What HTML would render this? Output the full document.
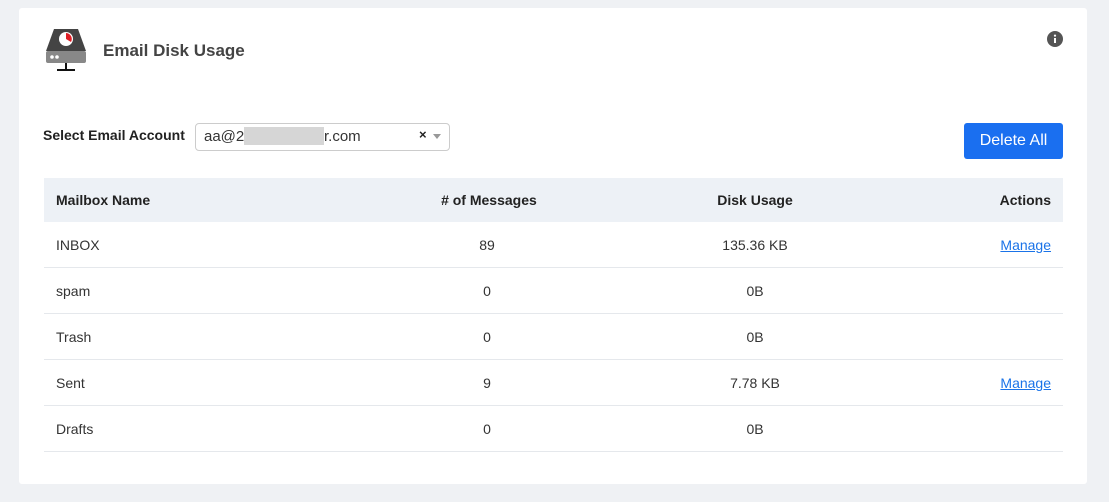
<!DOCTYPE html>
<html><head><style>
body{margin:0;width:1109px;height:502px;background:#eff1f4;font-family:"Liberation Sans",sans-serif;color:#222;position:relative;overflow:hidden}
.card{position:absolute;left:19px;top:8px;width:1068px;height:476px;background:#fff;border-radius:3px}
.abs{position:absolute}
table{position:absolute;left:44px;top:178px;width:1019px;border-collapse:collapse;font-size:14px;table-layout:fixed}
th{background:#edf1f6;height:44px;padding:0;font-weight:bold;font-size:14px;color:#222}
td{height:45px;padding:0;border-bottom:1px solid #e5e8ec;color:#333}
th:first-child,td:first-child{text-align:left;padding-left:12px}
th:last-child,td:last-child{text-align:right;padding-right:12px}
.c{text-align:center}
a{color:#1a73e8;text-decoration:underline}
</style></head><body>
<div class="card"></div>
<svg class="abs" style="left:45px;top:27px" width="44" height="46" viewBox="0 0 44 46">
<path d="M9 2 H33 L41 24 H1 Z" fill="#444"/>
<rect x="1" y="24" width="40" height="12" rx="2" fill="#888"/>
<circle cx="7" cy="30" r="1.8" fill="#fff"/><circle cx="12" cy="30" r="1.8" fill="#fff"/>
<circle cx="21" cy="12" r="7" fill="#fff"/>
<path d="M21 12 V6 A6 6 0 0 1 26 15 Z" fill="#e01e25"/>
<rect x="20" y="36" width="2" height="7" fill="#111"/><rect x="12" y="42" width="18" height="2" fill="#111"/>
</svg>
<div class="abs" style="left:103px;top:41px;font-size:17px;font-weight:bold;color:#444">Email Disk Usage</div>
<svg class="abs" style="left:1047px;top:31px" width="16" height="16"><circle cx="8" cy="8" r="8" fill="#555"/><rect x="7" y="7" width="2" height="5" fill="#fff"/><circle cx="8" cy="4.6" r="1.1" fill="#fff"/></svg>
<div class="abs" style="left:43px;top:127px;font-size:14px;font-weight:bold;color:#222">Select Email Account</div>
<div class="abs" style="left:195px;top:123px;width:253px;height:26px;border:1px solid #ccc;border-radius:4px;background:#fff"></div>
<div class="abs" style="left:204px;top:128px;font-size:15px;color:#333">aa@2</div>
<div class="abs" style="left:244px;top:127px;width:80px;height:18px;background:#d6d6d6"></div>
<div class="abs" style="left:324px;top:128px;font-size:15px;color:#333">r.com</div>
<div class="abs" style="left:419px;top:127px;font-size:13px;font-weight:bold">×</div>
<div class="abs" style="left:433px;top:134px;width:0;height:0;border-left:4px solid transparent;border-right:4px solid transparent;border-top:5px solid #999"></div>
<div class="abs" style="left:964px;top:123px;width:99px;height:36px;background:#1a6ff0;border-radius:3px;color:#fff;font-size:16px;text-align:center;line-height:36px">Delete All</div>
<table>
<colgroup><col style="width:300px"><col style="width:286px"><col style="width:250px"><col style="width:183px"></colgroup>
<tr><th>Mailbox Name</th><th class="c">&nbsp;# of Messages</th><th class="c">Disk Usage</th><th>Actions</th></tr>
<tr><td>INBOX</td><td class="c">89</td><td class="c">135.36 KB</td><td><a>Manage</a></td></tr>
<tr><td>spam</td><td class="c">0</td><td class="c">0B</td><td></td></tr>
<tr><td>Trash</td><td class="c">0</td><td class="c">0B</td><td></td></tr>
<tr><td>Sent</td><td class="c">9</td><td class="c">7.78 KB</td><td><a>Manage</a></td></tr>
<tr><td>Drafts</td><td class="c">0</td><td class="c">0B</td><td></td></tr>
</table>
</body></html>
